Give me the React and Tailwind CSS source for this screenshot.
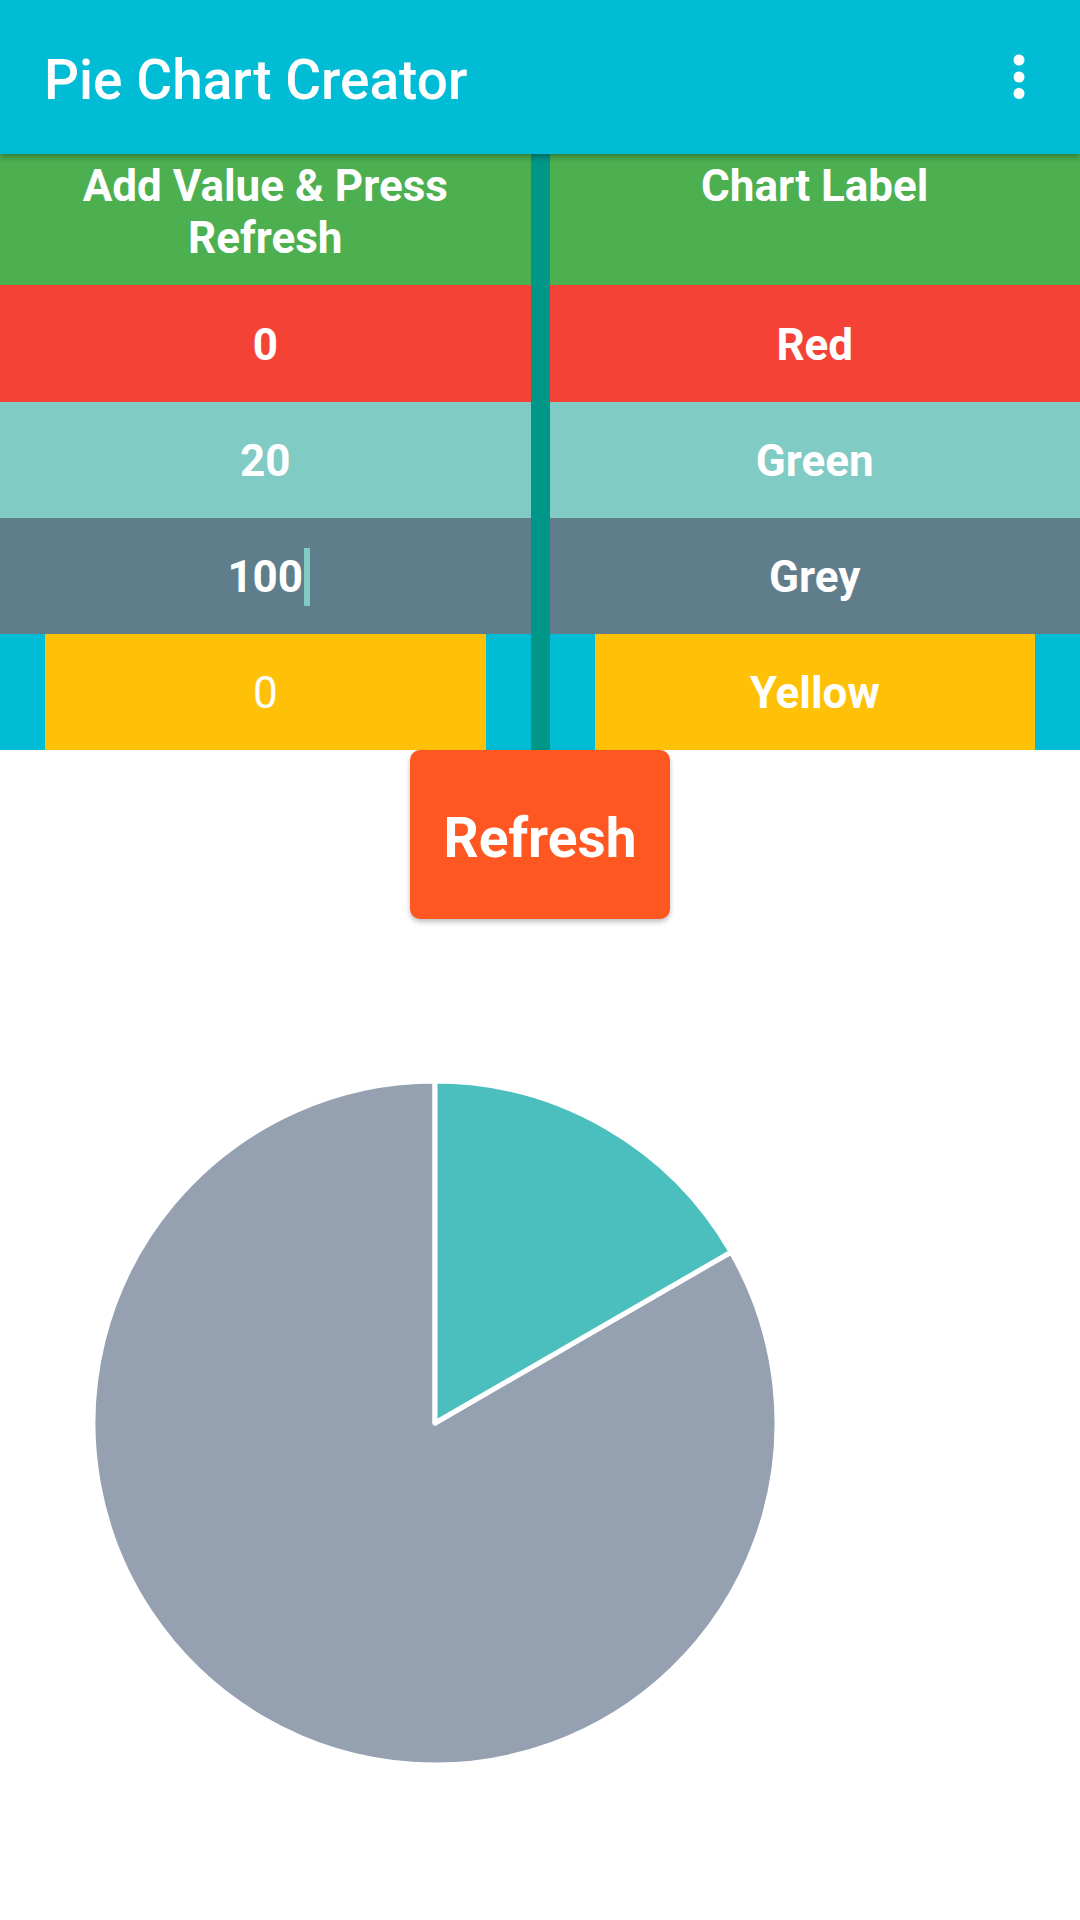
import React from "react";

const rows = [
  { value: "0", label: "Red", bg: "bg-[#F44336]", h: "h-[117px]" },
  { value: "20", label: "Green", bg: "bg-[#80CBC4]", h: "h-[116px]" },
  { value: "100", label: "Grey", bg: "bg-[#607D8B]", h: "h-[116px]", cursor: true },
];

function Cell({ bg, h, children }) {
  return (
    <div className={`${bg} ${h} flex items-center justify-center pt-[2px] text-[44px] font-bold text-white`}>
      {children}
    </div>
  );
}

function Column({ header, field }) {
  return (
    <div className="flex-1 flex flex-col">
      <div className="h-[131px] bg-[#4CAF50] pt-[6px] px-4 text-center text-[44px] leading-[52px] font-bold text-white">
        {header}
      </div>
      {rows.map((r) => (
        <Cell key={r.label} bg={r.bg} h={r.h}>
          {field === "value" ? (
            <span className="relative">
              {r.value}
              {r.cursor && (
                <span className="absolute left-full top-1/2 -translate-y-1/2 ml-[1px] w-[6px] h-[58px] bg-[#80CBC4]" />
              )}
            </span>
          ) : (
            r.label
          )}
        </Cell>
      ))}
      <div className="h-[116px] px-[45px]">
        <div
          className={`h-full bg-[#FFC107] flex items-center justify-center pt-[2px] text-[44px] text-white ${
            field === "value" ? "font-normal" : "font-bold"
          }`}
        >
          {field === "value" ? "0" : "Yellow"}
        </div>
      </div>
    </div>
  );
}

function Pie() {
  const cx = 435;
  const cy = 504;
  const r = 342;
  const a = (60 * Math.PI) / 180;
  const ex = cx + r * Math.sin(a);
  const ey = cy - r * Math.cos(a);
  return (
    <svg width="1080" height="1000" viewBox="0 0 1080 1000" className="block">
      <path
        d={`M${cx} ${cy} L${ex} ${ey} A${r} ${r} 0 1 1 ${cx} ${cy - r} Z`}
        fill="#95A0B1"
        stroke="#ffffff"
        strokeWidth="5"
        strokeLinejoin="round"
      />
      <path
        d={`M${cx} ${cy} L${cx} ${cy - r} A${r} ${r} 0 0 1 ${ex} ${ey} Z`}
        fill="#4ABFBD"
        stroke="#ffffff"
        strokeWidth="5"
        strokeLinejoin="round"
      />
    </svg>
  );
}

export default function App() {
  return (
    <div className="w-[1080px] h-[1920px] bg-white overflow-hidden font-['Roboto',sans-serif]">
      <header className="relative z-10 h-[154px] bg-[#00BCD4] flex items-center justify-between pl-[44px] pr-[55px] pt-[6px] shadow-[0_3px_6px_rgba(0,0,0,0.3)]">
        <h1 className="text-[55px] font-medium text-white leading-none">Pie Chart Creator</h1>
        <svg width="12" height="46" viewBox="0 0 12 46" className="-mt-[6px]">
          <circle cx="6" cy="6" r="5.5" fill="#fff" />
          <circle cx="6" cy="23" r="5.5" fill="#fff" />
          <circle cx="6" cy="39.5" r="5.5" fill="#fff" />
        </svg>
      </header>

      <div className="flex bg-[#00BCD4]">
        <Column header="Add Value & Press Refresh" field="value" />
        <div className="w-[19px] bg-[#009688]" />
        <Column header="Chart Label" field="label" />
      </div>

      <div className="flex justify-center">
        <button className="w-[260px] h-[169px] pt-[8px] rounded-[10px] bg-[#FF5722] text-white text-[55px] font-bold shadow-[0_3px_5px_rgba(0,0,0,0.25)]">
          Refresh
        </button>
      </div>

      <Pie />
    </div>
  );
}
